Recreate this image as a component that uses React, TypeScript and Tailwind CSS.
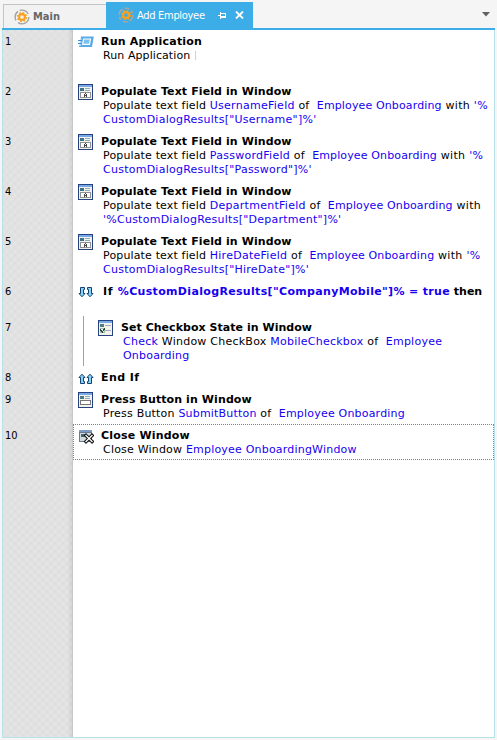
import type { ReactNode } from "react";

function GearIcon({ active = false }: { active?: boolean }) {
  return (
    <svg className="h-4 w-4 shrink-0" viewBox="0 0 16 16" fill="none">
      <circle cx="8" cy="8" r="6.9" stroke={active ? "#b5a59a" : "#a3a3a3"} strokeWidth="1.4" strokeDasharray={active ? "7 2 5 2.5 3 2.2" : "15 3 10 2 10 3.3"} />
      <circle cx="8" cy="8" r="4.3" stroke="#f8a11f" strokeWidth="1.7" strokeDasharray="1.7 1.677" />
      <circle cx="8" cy="8" r="2.9" stroke="#f8a11f" strokeWidth="2.1" />
    </svg>
  );
}

function WindowFrame({ children }: { children: ReactNode }) {
  return (
    <svg className="h-[16px] w-[15px]" viewBox="0 0 15 16" shapeRendering="crispEdges">
      <rect width="15" height="16" fill="#27417f" />
      <rect x="1" y="1" width="13" height="2" fill="#76aae8" />
      <rect x="1" y="3" width="13" height="12" fill="#f5f3e9" />
      {children}
    </svg>
  );
}

function TextFieldIcon() {
  return (
    <WindowFrame>
      <path d="M2 4h4v3H2z" fill="#3e7485" />
      <path d="M7 4h5v1H7zM7 6h5v1H7z" fill="#8caac6" />
      <path d="M2 8h11v6H2z" fill="#8e9295" />
      <path d="M3 9h9v4H3z" fill="#fff" />
      <path d="M7 9h1v1H7zM6 10h1v3H6zM8 10h1v3H8zM7 11h1v1H7z" fill="#444" />
    </WindowFrame>
  );
}

function CheckboxIcon() {
  return (
    <WindowFrame>
      <path d="M2 4h4v3H2z" fill="#4d7e80" />
      <path d="M7 5h6v1H7zM7 10h6v1H7z" fill="#9eabc8" />
      <path d="M2 8h5v5H2z" fill="#a8b7ac" />
      <path d="M3 9h3v3H3z" fill="#f2f5ef" />
      <path d="M2 9h1v2H2zM3 10h1v2H3zM4 11h1v2H4zM5 9h1v2H5zM6 8h1v2H6z" fill="#174c32" />
    </WindowFrame>
  );
}

function ButtonIcon() {
  return (
    <WindowFrame>
      <path d="M2 4h4v3H2z" fill="#4f7d87" />
      <path d="M7 4h5v1H7zM7 6h5v1H7z" fill="#8caac6" />
      <rect x="2.5" y="8.5" width="10" height="4" rx="1" fill="#fff" stroke="#777" />
    </WindowFrame>
  );
}

function RunIcon() {
  return (
    <svg className="h-[12px] w-[16px]" viewBox="0 0 16 12">
      <path d="M3 .5h12.8L14 11H1z" fill="#58abe8" />
      <path d="M5.6 3h6.9l-1 5.4H4.6z" fill="#7dc0f0" stroke="#fff" strokeWidth="1.1" />
      <path d="M0 3h3.5M0 6h3.5M0 9h3" stroke="#fff" />
      <path d="M0 4.5h4M0 7.5h3.5" stroke="#3c90d8" />
    </svg>
  );
}

function ArrowsIcon({ up = false }: { up?: boolean }) {
  return (
    <svg className="h-[12px] w-[16px]" viewBox="0 0 16 12" fill="#83d5f5" stroke="#173f72" strokeWidth="1">
      {up ? (
        <>
          <path d="M2.5 10.5H6.5V8.5H5.5V4.5H7L4 1.2 1 4.5H2.5z" />
          <path d="M9.5 10.5H13.5V4.5H15L12 1.2 9 4.5H10.5V8.5H9.5z" />
        </>
      ) : (
        <>
          <path d="M2.5 .5H6.5V2.5H5.5V6.5H7L4 9.8 1 6.5H2.5z" />
          <path d="M9.5 .5H13.5V6.5H15L12 9.8 9 6.5H10.5V2.5H9.5z" />
        </>
      )}
    </svg>
  );
}

function CloseWindowIcon() {
  return (
    <svg className="h-[14px] w-[15px]" viewBox="0 0 15 14" shapeRendering="crispEdges">
      <rect width="13" height="12" fill="#6c7a92" />
      <rect x="0" y="0" width="13" height="2" fill="#7d9cc3" />
      <rect x="1" y="3" width="11" height="8" fill="#d3dadd" />
      <path d="M2 4h4v3H2z" fill="#3c6c77" />
      <g shapeRendering="auto" strokeLinecap="square">
        <path d="M7 5.5l6 6M13 5.5l-6 6" stroke="#111" strokeWidth="3.4" />
        <path d="M7 5.5l6 6M13 5.5l-6 6" stroke="#fff" strokeWidth="1.3" />
      </g>
    </svg>
  );
}

const B = ({ children, tracking = "" }: { children: ReactNode; tracking?: string }) => (
  <span className={`text-[#1600f2] ${tracking}`}>{children}</span>
);

type StepProps = {
  n: number;
  icon: ReactNode;
  title: ReactNode;
  height: string;
  titleTracking?: string;
  lines?: ReactNode[];
  nested?: boolean;
  selected?: boolean;
};

function Step({ n, icon, title, height, titleTracking = "tracking-[0.1px]", lines = [], nested, selected }: StepProps) {
  return (
    <div className={`flex ${height}`}>
      <div className="w-[70px] shrink-0 pt-[5px] pl-[2px] font-['DejaVu_Sans_Condensed','DejaVu_Sans',sans-serif] text-[11px] leading-[14px] [font-stretch:condensed]">{n}</div>
      <div className={`flex min-w-0 flex-1 border border-dotted ${selected ? "border-[#5b82dc]" : "border-transparent"}`}>
        {nested && <div className="-my-px ml-[9px] w-px shrink-0 bg-[#a0a0a0]" />}
        <div className={nested ? "ml-[14px] w-[23px] shrink-0 pt-[3px]" : "ml-[4px] w-[23px] shrink-0 pt-[3px]"}>{icon}</div>
        <div className="pt-[4px] whitespace-pre">
          <div className={`font-bold ${titleTracking}`}>{title}</div>
          {lines.map((line, i) => (
            <div key={i} className="pl-[2px] tracking-[0.2px]">{line}</div>
          ))}
        </div>
      </div>
    </div>
  );
}

function Populate({ n, field, result, wrapQuote }: { n: number; field: string; result: string; wrapQuote?: boolean }) {
  return (
    <Step
      n={n}
      height="h-[50px]"
      icon={<TextFieldIcon />}
      title="Populate Text Field in Window"
      lines={[
        <>
          <span className="tracking-[0.15px]">Populate text field </span>
          <B tracking="tracking-[0.27px]">{field}</B>
          {" of  "}
          <B tracking="tracking-[0.13px]">Employee Onboarding</B>
          <span className="tracking-[0.3px]"> with </span>
          {!wrapQuote && <B tracking="tracking-[0.4px]">'%</B>}
        </>,
        <B tracking="tracking-[0.25px]">{wrapQuote ? "'%" : ""}CustomDialogResults["{result}"]%'</B>,
      ]}
    />
  );
}

export default function App() {
  return (
    <div className="flex h-[740px] w-[497px] flex-col overflow-hidden bg-[#f5f5f5] font-['DejaVu_Sans',sans-serif] text-[11px] leading-[14px] text-black">
      <div className="flex h-[28px] shrink-0 items-end pl-[3px] font-['DejaVu_Sans_Condensed','DejaVu_Sans',sans-serif] [font-stretch:condensed]">
        <div className="flex h-[24px] w-[103px] items-center border border-r-0 border-b-0 border-[#c4c4c4] bg-[#f2f2f2] pl-[10px] font-bold text-[#666]">
          <GearIcon />
          <span className="ml-[3px]">Main</span>
        </div>
        <div className="flex h-[26px] w-[147px] items-center bg-[#3cade7] pl-[12px] text-white">
          <GearIcon active />
          <span className="ml-[3px] w-[81px] pt-px tracking-[-0.3px] whitespace-nowrap">Add Employee</span>
          <svg className="h-[7px] w-[8px]" viewBox="0 0 8 7" fill="#fff" shapeRendering="crispEdges">
            <path d="M0 3h2v1H0zM2 0h1v7H2zM3 1h5v1H3zM3 4h5v2H3zM7 1h1v5H7z" />
          </svg>
          <svg className="ml-[9px] h-[8px] w-[9px]" viewBox="0 0 9 8" stroke="#fff" strokeWidth="1.8">
            <path d="M1 .5l7 7M8 .5l-7 7" />
          </svg>
        </div>
        <svg className="mr-[7px] mb-[11px] ml-auto h-[5px] w-[8px]" viewBox="0 0 8 5" fill="#606060">
          <path d="M0 0h8L4 4.5z" />
        </svg>
      </div>
      <div className="ml-[2px] h-[2px] w-[493px] shrink-0 bg-[#3cade7]" />
      <div className="ml-[2px] h-[708px] w-[493px] border border-t-0 border-[#b9e1e9] bg-white bg-[linear-gradient(90deg,#0000_64px,#00000010_69px,#00000028_70px),repeating-linear-gradient(45deg,#ffffff1a_0_1.5px,transparent_3px_5px,#ffffff1a_5.66px),repeating-linear-gradient(135deg,#ffffff1a_0_1.5px,transparent_3px_5px,#ffffff1a_5.66px),linear-gradient(#dfdfdf,#dfdfdf)] bg-[length:70px_100%] bg-no-repeat">
        <Step
          n={1}
          height="h-[50px]"
          titleTracking="tracking-[0.2px]"
          icon={<div className="pt-[2px]"><RunIcon /></div>}
          title="Run Application"
          lines={[<span className="flex tracking-[0.08px]">Run Application <span className="mt-[2px] ml-px h-[9px] w-px bg-[#d0c8f8]" /></span>]}
        />
        <Populate n={2} field="UsernameField" result="Username" />
        <Populate n={3} field="PasswordField" result="Password" />
        <Populate n={4} field="DepartmentField" result="Department" wrapQuote />
        <Populate n={5} field="HireDateField" result="HireDate" />
        <Step
          n={6}
          height="h-[36px]"
          titleTracking="tracking-[0.33px]"
          icon={<div className="pt-[3px]"><ArrowsIcon /></div>}
          title={<span className="pl-[2px]"><span className="tracking-[0.7px]">If </span><B>%CustomDialogResults["CompanyMobile"]% = true</B><span className="tracking-[0px]"> then</span></span>}
        />
        <Step
          n={7}
          height="h-[50px]"
          nested
          titleTracking="tracking-[0.04px]"
          icon={<CheckboxIcon />}
          title="Set Checkbox State in Window"
          lines={[
            <span className="tracking-[0.24px]"><B>Check</B> Window CheckBox <B>MobileCheckbox</B> of  <B>Employee</B></span>,
            <B>Onboarding</B>,
          ]}
        />
        <Step n={8} height="h-[22px]" titleTracking="tracking-[0.4px]" icon={<div className="pt-[3px]"><ArrowsIcon up /></div>} title="End If" />
        <Step
          n={9}
          height="h-[36px]"
          icon={<ButtonIcon />}
          title="Press Button in Window"
          lines={[<span className="tracking-[0.2px]">Press Button <B>SubmitButton</B> of  <B>Employee Onboarding</B></span>]}
        />
        <Step
          n={10}
          height="h-[36px]"
          selected
          titleTracking="tracking-[0.2px]"
          icon={<div className="pt-[2px] pl-px"><CloseWindowIcon /></div>}
          title="Close Window"
          lines={[<>Close Window <B>Employee OnboardingWindow</B></>]}
        />
      </div>
    </div>
  );
}
